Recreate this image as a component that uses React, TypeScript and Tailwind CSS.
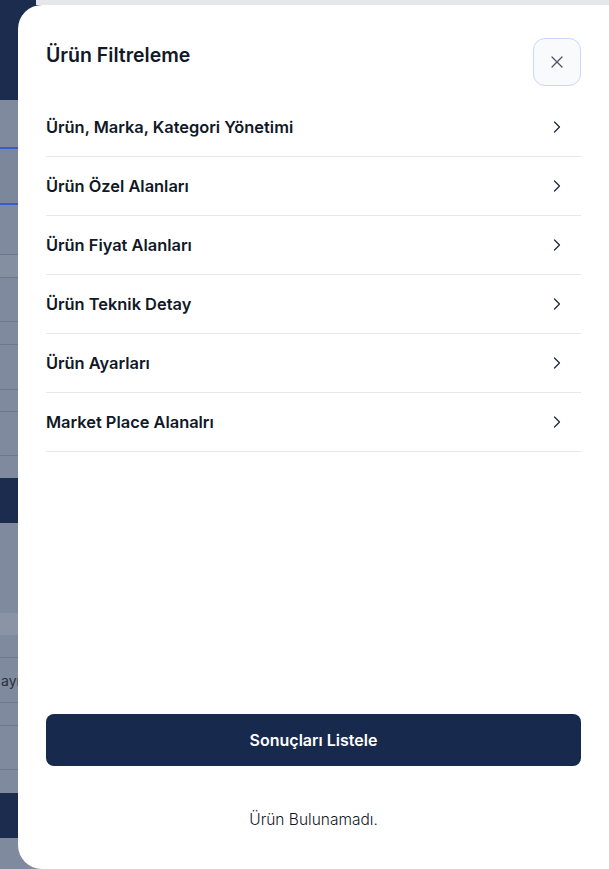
import { X, ChevronRight } from "lucide-react";

const items = [
  "Ürün, Marka, Kategori Yönetimi",
  "Ürün Özel Alanları",
  "Ürün Fiyat Alanları",
  "Ürün Teknik Detay",
  "Ürün Ayarları",
  "Market Place Alanalrı",
];

// page that sits behind the drawer (only a thin strip is visible)
function BackdropPage() {
  return (
    <div className="flex flex-col w-full h-full bg-[#7d889c]">
      <div className="h-[100px] bg-[#1b2c4e]" />
      <div className="h-[47px] bg-[#7f8a9e]" />
      <div className="h-[2px] bg-[#3a5bd0]" />
      <div className="h-[54px] bg-[#7c879b]" />
      <div className="h-[2px] bg-[#3a5bd0]" />
      <div className="h-[50px] bg-[#7f8a9e] border-b border-[#6d788c]" />
      <div className="h-[23px] bg-[#848fa2] border-b border-[#6d788c]" />
      <div className="h-[44px] bg-[#7f8a9e] border-b border-[#6d788c]" />
      <div className="h-[23px] bg-[#7f8a9e] border-b border-[#6d788c]" />
      <div className="h-[45px] bg-[#7f8a9e] border-b border-[#6d788c]" />
      <div className="h-[22px] bg-[#7f8a9e] border-b border-[#6d788c]" />
      <div className="h-[44px] bg-[#7f8a9e] border-b border-[#6d788c]" />
      <div className="h-[22px] bg-[#7f8a9e]" />
      <div className="h-[45px] bg-[#1b2c4e]" />
      <div className="h-[90px] bg-[#7f8a9e]" />
      <div className="h-[22px] bg-[#8a94a6]" />
      <div className="h-[23px] bg-[#7f8a9e] border-b border-[#6d788c]" />
      <div className="h-[45px] bg-[#7f8a9e] border-b border-[#6d788c] flex items-center text-[14px] text-[#2a3140] overflow-hidden whitespace-nowrap">
        <span className="pl-[1px]">ayıs</span>
      </div>
      <div className="h-[23px] bg-[#7f8a9e] border-b border-[#6d788c]" />
      <div className="h-[44px] bg-[#7f8a9e] border-b border-[#6d788c]" />
      <div className="h-[23px] bg-[#7f8a9e]" />
      <div className="h-[45px] bg-[#1b2c4e]" />
      <div className="flex-1 bg-[#7f8a9e]" />
    </div>
  );
}

export default function App() {
  return (
    <div
      className="relative w-[609px] h-[869px] overflow-hidden bg-white"
      style={{ fontFamily: "Inter, 'Noto Sans', sans-serif" }}
    >
      <BackdropPage />
      <div className="absolute top-0 left-[36px] right-0 h-[5px] bg-[#e5e7eb]" />

      {/* Filter drawer */}
      <aside className="absolute top-[5px] left-[18px] right-0 bottom-0 bg-white rounded-l-3xl flex flex-col px-7 pt-[33px]">
        <div className="flex justify-between items-start">
          <h2 className="mt-[3px] text-[19.5px] leading-7 font-semibold text-[#111827]">
            Ürün Filtreleme
          </h2>
          <button className="w-12 h-12 flex items-center justify-center rounded-xl border border-[#c9d6fb] bg-[#f8fafc] text-[#4b5563]">
            <X className="w-5 h-5" strokeWidth={1.5} />
          </button>
        </div>

        <ul className="mt-3">
          {items.map((label) => (
            <li
              key={label}
              className="h-[59px] flex items-center justify-between border-b border-[#e5e7eb]"
            >
              <span className="text-[16.4px] font-semibold text-[#111827]">
                {label}
              </span>
              <ChevronRight
                className="w-5 h-5 mr-[14px] text-[#1f2937]"
                strokeWidth={1.5}
              />
            </li>
          ))}
        </ul>

        <div className="flex-1" />

        <button className="h-[52px] w-full rounded-lg bg-[#172a4d] text-white text-[16px] font-semibold">
          Sonuçları Listele
        </button>
        <p className="mt-[44px] mb-[39px] text-center text-[15.5px] leading-5 font-light text-[#111827]">
          Ürün Bulunamadı.
        </p>
      </aside>
    </div>
  );
}
